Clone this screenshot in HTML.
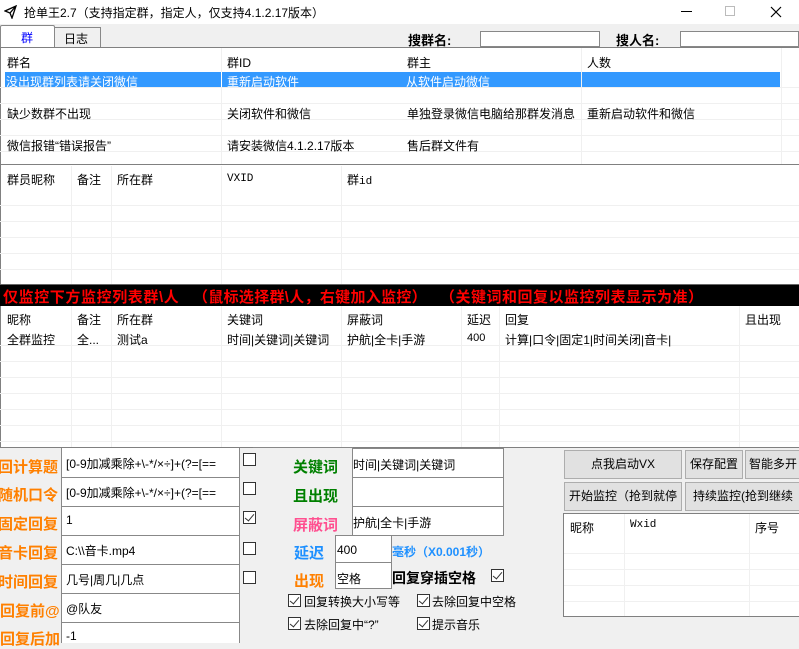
<!DOCTYPE html>
<html><head><meta charset="utf-8"><style>
*{margin:0;padding:0;box-sizing:border-box}
body{width:799px;height:643px;overflow:hidden;background:#f0f0f0;position:relative;font:12px "Liberation Sans","Noto Sans CJK SC","WenQuanYi Zen Hei",sans-serif;color:#000}
.a{position:absolute;white-space:nowrap}
.w{position:absolute;background:#fff}
.hl{position:absolute;height:1px;background:#f0f0f0}
.vl{position:absolute;width:1px;background:#f0f0f0}
.cb{position:absolute;width:13px;height:13px;border:1px solid #333;background:#fff}
.cb.c::after{content:"";position:absolute;left:3px;top:0px;width:4px;height:8px;border:solid #333;border-width:0 1.5px 1.5px 0;transform:rotate(40deg)}
.lab{position:absolute;font-weight:bold;font-size:15px;white-space:nowrap}
.btn{position:absolute;background:#e1e1e1;border:1px solid #adadad;text-align:center;line-height:27px;font-size:12px;white-space:nowrap;overflow:hidden}
.red{position:absolute;top:286px;color:#f00;font-weight:bold;font-size:15px;white-space:nowrap}
</style></head><body>
<div class="w" style="left:0;top:0;width:799px;height:24px"></div>
<svg class="a" style="left:4px;top:5px" width="14" height="14" viewBox="0 0 14 14"><path d="M1 6 L12 1 L8 13 L6 8 Z M6 8 L12 1" fill="none" stroke="#000" stroke-width="1.3"/></svg>
<div class="a" style="left:24px;top:4px;font-size:12px">抢单王2.7（支持指定群，指定人，仅支持4.1.2.17版本）</div>
<div class="a" style="left:681px;top:11px;width:11px;height:1px;background:#000"></div>
<div class="a" style="left:725px;top:6px;width:10px;height:10px;border:1px solid #bbb"></div>
<svg class="a" style="left:770px;top:6px" width="12" height="12"><path d="M1 1L11 11M11 1L1 11" stroke="#000" stroke-width="1.2"/></svg>
<div class="a" style="left:0;top:25px;width:55px;height:23px;background:#fff;border:1px solid #888;border-bottom:none;border-radius:2px 2px 0 0"></div>
<div class="a" style="left:21px;top:29px;color:#00f">群</div>
<div class="a" style="left:54px;top:27px;width:47px;height:20px;border:1px solid #888;border-bottom:none;background:#f0f0f0"></div>
<div class="a" style="left:64px;top:30px">日志</div>
<div class="a" style="left:408px;top:30px;font-weight:bold;font-size:13px">搜群名:</div>
<div class="a" style="left:480px;top:31px;width:120px;height:16px;background:#fff;border:1px solid #888"></div>
<div class="a" style="left:616px;top:30px;font-weight:bold;font-size:13px">搜人名:</div>
<div class="a" style="left:680px;top:31px;width:119px;height:16px;background:#fff;border:1px solid #888"></div>
<div class="w" style="left:0;top:47px;width:799px;height:118px;border-top:1px solid #808080;border-bottom:1px solid #808080;border-left:1px solid #808080"></div>
<div class="a" style="left:5px;top:72px;width:775px;height:15px;background:#3399ff"></div>
<div class="hl" style="left:0;top:87px;width:799px"></div><div class="hl" style="left:0;top:103px;width:799px"></div><div class="hl" style="left:0;top:119px;width:799px"></div><div class="hl" style="left:0;top:135px;width:799px"></div><div class="hl" style="left:0;top:151px;width:799px"></div>
<div class="vl" style="left:221px;top:48px;height:116px"></div><div class="vl" style="left:581px;top:48px;height:116px"></div><div class="vl" style="left:781px;top:48px;height:116px"></div>
<div class="vl" style="left:221px;top:72px;height:15px;background:#fff"></div>
<div class="a" style="left:7px;top:54px">群名</div><div class="a" style="left:227px;top:54px">群ID</div><div class="a" style="left:407px;top:54px">群主</div><div class="a" style="left:587px;top:54px">人数</div>
<div class="a" style="left:6px;top:73px;color:#fff">没出现群列表请关闭微信</div><div class="a" style="left:227px;top:73px;color:#fff">重新启动软件</div><div class="a" style="left:406px;top:73px;color:#fff">从软件启动微信</div>
<div class="a" style="left:7px;top:105px">缺少数群不出现</div><div class="a" style="left:227px;top:105px">关闭软件和微信</div><div class="a" style="left:407px;top:105px">单独登录微信电脑给那群发消息</div><div class="a" style="left:587px;top:105px">重新启动软件和微信</div>
<div class="a" style="left:7px;top:137px">微信报错“错误报告”</div><div class="a" style="left:227px;top:137px">请安装微信4.1.2.17版本</div><div class="a" style="left:407px;top:137px">售后群文件有</div>
<div class="w" style="left:0;top:165px;width:799px;height:120px;border-left:1px solid #808080"></div>
<div class="hl" style="left:0;top:205px;width:799px"></div><div class="hl" style="left:0;top:221px;width:799px"></div><div class="hl" style="left:0;top:237px;width:799px"></div><div class="hl" style="left:0;top:253px;width:799px"></div><div class="hl" style="left:0;top:269px;width:799px"></div>
<div class="vl" style="left:71px;top:166px;height:118px"></div><div class="vl" style="left:111px;top:166px;height:118px"></div><div class="vl" style="left:221px;top:166px;height:118px"></div><div class="vl" style="left:341px;top:166px;height:118px"></div>
<div class="a" style="left:7px;top:171px">群员昵称</div><div class="a" style="left:77px;top:171px">备注</div><div class="a" style="left:117px;top:171px">所在群</div><div class="a" style="left:227px;top:173px;font-family:'Liberation Mono',monospace;font-size:11px">VXID</div><div class="a" style="left:347px;top:171px">群<span style="font-family:'Liberation Mono',monospace;font-size:11px">id</span></div>
<div class="a" style="left:0;top:284px;width:799px;height:22px;background:#000;border-top:1px solid #666"></div>
<div class="red" style="left:3px;letter-spacing:0.6px">仅监控下方监控列表群\人</div>
<div class="red" style="left:193px;letter-spacing:0.3px">（鼠标选择群\人，右键加入监控）</div>
<div class="red" style="left:440px;letter-spacing:0.5px">（关键词和回复以监控列表显示为准）</div>
<div class="w" style="left:0;top:306px;width:799px;height:142px;border-left:1px solid #808080;border-bottom:1px solid #808080"></div>
<div class="hl" style="left:0;top:345px;width:799px"></div><div class="hl" style="left:0;top:361px;width:799px"></div><div class="hl" style="left:0;top:377px;width:799px"></div><div class="hl" style="left:0;top:393px;width:799px"></div><div class="hl" style="left:0;top:409px;width:799px"></div><div class="hl" style="left:0;top:425px;width:799px"></div><div class="hl" style="left:0;top:441px;width:799px"></div>
<div class="vl" style="left:71px;top:306px;height:141px"></div><div class="vl" style="left:111px;top:306px;height:141px"></div><div class="vl" style="left:221px;top:306px;height:141px"></div><div class="vl" style="left:341px;top:306px;height:141px"></div><div class="vl" style="left:461px;top:306px;height:141px"></div><div class="vl" style="left:499px;top:306px;height:141px"></div><div class="vl" style="left:739px;top:306px;height:141px"></div>
<div class="a" style="left:7px;top:311px">昵称</div><div class="a" style="left:77px;top:311px">备注</div><div class="a" style="left:117px;top:311px">所在群</div><div class="a" style="left:227px;top:311px">关键词</div><div class="a" style="left:347px;top:311px">屏蔽词</div><div class="a" style="left:467px;top:311px">延迟</div><div class="a" style="left:505px;top:311px">回复</div><div class="a" style="left:745px;top:311px">且出现</div>
<div class="a" style="left:7px;top:331px">全群监控</div><div class="a" style="left:77px;top:331px">全...</div><div class="a" style="left:117px;top:331px">测试a</div><div class="a" style="left:227px;top:331px">时间|关键词|关键词</div><div class="a" style="left:347px;top:331px">护航|全卡|手游</div><div class="a" style="left:467px;top:332px;font-size:11px">400</div><div class="a" style="left:505px;top:331px">计算|口令|固定1|时间关闭|音卡|</div>
<div class="lab" style="left:-2px;top:456px;color:#ff8000">回计算题</div>
<div class="lab" style="left:-2px;top:484px;color:#ff8000">随机口令</div>
<div class="lab" style="left:-2px;top:513px;color:#ff8000">固定回复</div>
<div class="lab" style="left:-2px;top:542px;color:#ff8000">音卡回复</div>
<div class="lab" style="left:-2px;top:571px;color:#ff8000">时间回复</div>
<div class="lab" style="left:0px;top:600px;color:#ff8000">回复前@</div>
<div class="lab" style="left:0px;top:628px;color:#ff8000">回复后加</div>
<div class="a" style="left:61px;top:448px;width:179px;height:195px;background:#fff;border-left:1px solid #888;border-right:1px solid #888"></div>
<div class="hl" style="left:62px;top:477px;width:177px;background:#888"></div><div class="hl" style="left:62px;top:506px;width:177px;background:#888"></div><div class="hl" style="left:62px;top:535px;width:177px;background:#888"></div><div class="hl" style="left:62px;top:564px;width:177px;background:#888"></div><div class="hl" style="left:62px;top:593px;width:177px;background:#888"></div><div class="hl" style="left:62px;top:622px;width:177px;background:#888"></div>
<div class="a" style="left:66px;top:455px;width:172px;overflow:hidden">[0-9加减乘除+\-*/×÷]+(?=[==</div>
<div class="a" style="left:66px;top:484px;width:172px;overflow:hidden">[0-9加减乘除+\-*/×÷]+(?=[==</div>
<div class="a" style="left:66px;top:513px">1</div>
<div class="a" style="left:66px;top:542px">C:\\音卡.mp4</div>
<div class="a" style="left:66px;top:571px">几号|周几|几点</div>
<div class="a" style="left:66px;top:600px">@队友</div>
<div class="a" style="left:66px;top:629px">-1</div>
<div class="cb" style="left:243px;top:453px"></div>
<div class="cb" style="left:243px;top:482px"></div>
<div class="cb c" style="left:243px;top:511px"></div>
<div class="cb" style="left:243px;top:571px"></div>
<div class="cb" style="left:243px;top:542px"></div>
<div class="a" style="left:253px;top:447px;width:100px;height:1px;background:#888"></div>
<div class="lab" style="left:293px;top:456px;color:#008000">关键词</div>
<div class="lab" style="left:293px;top:485px;color:#008000">且出现</div>
<div class="lab" style="left:293px;top:514px;color:#ff5090">屏蔽词</div>
<div class="lab" style="left:294px;top:542px;color:#1e90ff">延迟</div>
<div class="lab" style="left:294px;top:570px;color:#ff8000">出现</div>
<div class="a" style="left:352px;top:448px;width:152px;height:88px;background:#fff;border:1px solid #888"></div>
<div class="hl" style="left:353px;top:477px;width:150px;background:#888"></div><div class="hl" style="left:353px;top:506px;width:150px;background:#888"></div>
<div class="a" style="left:353px;top:456px">时间|关键词|关键词</div>
<div class="a" style="left:353px;top:514px">护航|全卡|手游</div>
<div class="a" style="left:335px;top:535px;width:57px;height:54px;background:#fff;border:1px solid #888"></div>
<div class="hl" style="left:336px;top:562px;width:55px;background:#888"></div>
<div class="a" style="left:337px;top:543px">400</div>
<div class="a" style="left:337px;top:570px">空格</div>
<div class="a" style="left:392px;top:543px;color:#1e90ff;font-weight:bold;font-size:12px">毫秒（X0.001秒）</div>
<div class="a" style="left:392px;top:568px;font-weight:bold;font-size:14px">回复穿插空格</div>
<div class="cb c" style="left:491px;top:569px"></div>
<div class="cb c" style="left:288px;top:594px"></div><div class="a" style="left:304px;top:593px">回复转换大小写等</div>
<div class="cb c" style="left:417px;top:594px"></div><div class="a" style="left:432px;top:593px">去除回复中空格</div>
<div class="cb c" style="left:288px;top:617px"></div><div class="a" style="left:304px;top:616px">去除回复中“?”</div>
<div class="cb c" style="left:417px;top:617px"></div><div class="a" style="left:432px;top:616px">提示音乐</div>
<div class="btn" style="left:564px;top:450px;width:118px;height:29px">点我启动VX</div>
<div class="btn" style="left:685px;top:450px;width:58px;height:29px">保存配置</div>
<div class="btn" style="left:745px;top:450px;width:56px;height:29px">智能多开</div>
<div class="btn" style="left:564px;top:482px;width:118px;height:29px">开始监控（抢到就停</div>
<div class="btn" style="left:685px;top:482px;width:116px;height:29px">持续监控(抢到继续</div>
<div class="a" style="left:563px;top:513px;width:240px;height:104px;background:#fff;border:1px solid #808080"></div>
<div class="hl" style="left:564px;top:553px;width:235px"></div><div class="hl" style="left:564px;top:569px;width:235px"></div><div class="hl" style="left:564px;top:585px;width:235px"></div><div class="hl" style="left:564px;top:601px;width:235px"></div>
<div class="vl" style="left:624px;top:514px;height:102px"></div><div class="vl" style="left:749px;top:514px;height:102px"></div>
<div class="a" style="left:570px;top:519px">昵称</div><div class="a" style="left:630px;top:519px;font-family:'Liberation Mono',monospace;font-size:11px">Wxid</div><div class="a" style="left:755px;top:519px">序号</div>
</body></html>
